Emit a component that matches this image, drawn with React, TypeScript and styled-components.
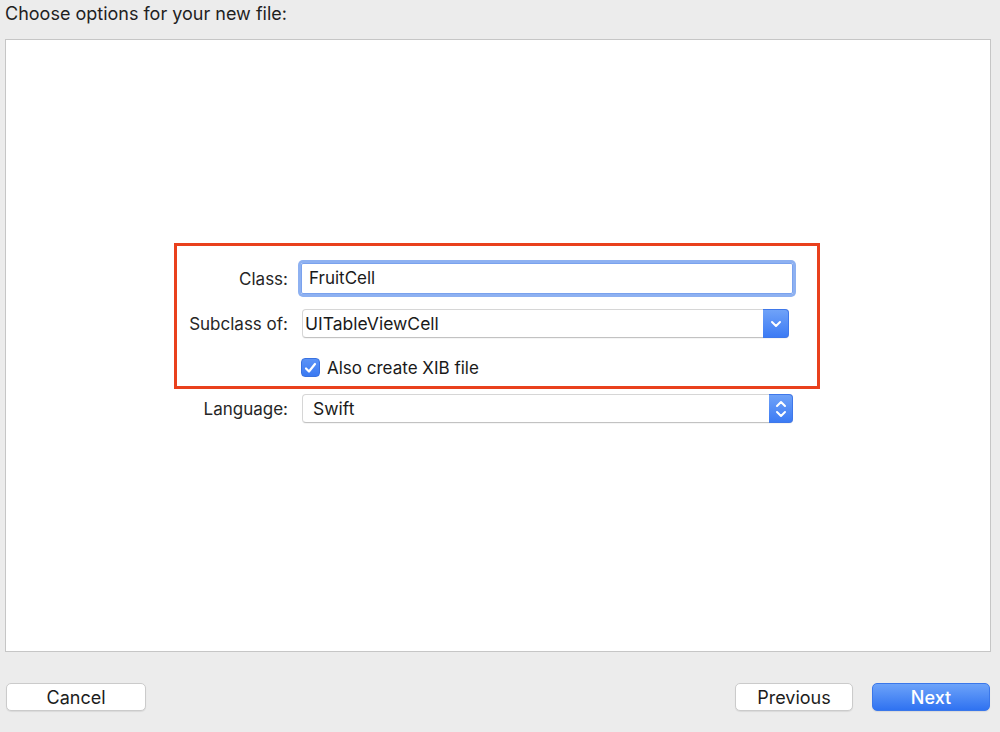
import styled, { createGlobalStyle } from "styled-components";

const GlobalStyle = createGlobalStyle`
    html, body {
        margin: 0;
        padding: 0;
        background: #ececec;
    }
    body {
        font-family: "Inter", "Liberation Sans", sans-serif;
        color: #1d1d1d;
        -webkit-font-smoothing: antialiased;
    }
`;

const ChevronDown = () => (
    <svg width="12" height="8" viewBox="0 0 12 8">
        <path d="M2 2 L6 6 L10 2" fill="none" stroke="#fff" strokeWidth="2" strokeLinecap="round" strokeLinejoin="round" />
    </svg>
);

const UpDown = () => (
    <svg width="12" height="20" viewBox="0 0 12 20">
        <path d="M2 7 L6 3 L10 7" fill="none" stroke="#fff" strokeWidth="2" strokeLinecap="round" strokeLinejoin="round" />
        <path d="M2 13 L6 17 L10 13" fill="none" stroke="#fff" strokeWidth="2" strokeLinecap="round" strokeLinejoin="round" />
    </svg>
);

const Check = () => (
    <svg width="13" height="12" viewBox="0 0 13 12">
        <path d="M2 6.5 L5 9.5 L11 2" fill="none" stroke="#fff" strokeWidth="2.2" strokeLinecap="round" strokeLinejoin="round" />
    </svg>
);

const App: React.FC = () => {
    return (
        <>
            <GlobalStyle />
            <Window>
                <Title>Choose options for your new file:</Title>
                <Panel>
                    <Form>
                        <Highlight>
                            <Row>
                                <Label>Class:</Label>
                                <TextField>FruitCell</TextField>
                            </Row>
                            <Row>
                                <Label>Subclass of:</Label>
                                <Popup $width={487}>
                                    <PopupValue $inset={2}>UITableViewCell</PopupValue>
                                    <PopupArrow $width={25}>
                                        <ChevronDown />
                                    </PopupArrow>
                                </Popup>
                            </Row>
                            <Row>
                                <span />
                                <CheckRow>
                                    <CheckBox>
                                        <Check />
                                    </CheckBox>
                                    <CheckLabel>Also create XIB file</CheckLabel>
                                </CheckRow>
                            </Row>
                        </Highlight>
                        <PlainRow>
                            <Label>Language:</Label>
                            <Popup $width={491}>
                                <PopupValue $inset={10}>Swift</PopupValue>
                                <PopupArrow $width={23}>
                                    <UpDown />
                                </PopupArrow>
                            </Popup>
                        </PlainRow>
                    </Form>
                </Panel>
                <Footer>
                    <Button $width={140}>Cancel</Button>
                    <Spacer />
                    <Button $width={118}>Previous</Button>
                    <Button $width={118} $primary>
                        Next
                    </Button>
                </Footer>
            </Window>
        </>
    );
};

export default App;

const Window = styled.div`
    width: 1000px;
    height: 732px;
    display: flex;
    flex-direction: column;
    overflow: hidden;
`;

const Title = styled.div`
    height: 39px;
    padding-left: 5px;
    font-size: 18px;
    line-height: 28px;
    color: #1f1f1f;
`;

const Panel = styled.div`
    margin-left: 5px;
    width: 984px;
    height: 611px;
    background: #fff;
    border: 1px solid #c6c6c6;
`;

const Form = styled.div`
    margin-top: 203px;
    margin-left: 168px;
    display: flex;
    flex-direction: column;
    gap: 5px;
`;

const Highlight = styled.div`
    width: 640px;
    border: 3px solid #e9401d;
    padding: 17px 0 4px;
    display: flex;
    flex-direction: column;
    gap: 15px;
`;

const Row = styled.div`
    display: grid;
    grid-template-columns: 111px auto;
    column-gap: 13px;
    align-items: center;
`;

const PlainRow = styled(Row)`
    margin-left: 3px;
`;

const Label = styled.div`
    text-align: right;
    font-size: 17px;
    color: #262626;
`;

const TextField = styled.div`
    width: 492px;
    height: 31px;
    box-sizing: border-box;
    border: 1px solid #7aa2ee;
    border-radius: 2px;
    box-shadow: 0 0 0 3px #8eb1f1;
    padding-left: 7px;
    font-size: 17px;
    line-height: 29px;
    color: #1a1a1a;
`;

const Popup = styled.div<{ $width: number }>`
    width: ${({ $width }) => $width}px;
    height: 29px;
    box-sizing: border-box;
    margin-left: 1px;
    display: flex;
    border: 1px solid #d6d6d6;
    border-bottom-color: #c2c2c2;
    border-radius: 4px;
    background: #fff;
    box-shadow: 0 1px 0 rgba(0, 0, 0, 0.04);
`;

const PopupValue = styled.div<{ $inset: number }>`
    flex: 1;
    padding-left: ${({ $inset }) => $inset}px;
    font-size: 17.5px;
    line-height: 27px;
    color: #1a1a1a;
`;

const PopupArrow = styled.div<{ $width: number }>`
    width: ${({ $width }) => $width}px;
    margin: -1px -1px -1px 0;
    display: flex;
    align-items: center;
    justify-content: center;
    border-radius: 0 4px 4px 0;
    background: linear-gradient(#6fa2f8, #3c7bf4);
    border: 1px solid #3f78ea;
    border-left: none;
`;

const CheckRow = styled.div`
    height: 29px;
    display: flex;
    align-items: center;
    gap: 7px;
`;

const CheckBox = styled.div`
    width: 19px;
    height: 19px;
    box-sizing: border-box;
    border-radius: 4px;
    background: linear-gradient(#5b93f7, #3a79f2);
    border: 1px solid #3a72e0;
    display: flex;
    align-items: center;
    justify-content: center;
`;

const CheckLabel = styled.span`
    font-size: 17px;
    color: #1a1a1a;
`;

const Footer = styled.div`
    display: flex;
    align-items: center;
    gap: 19px;
    padding: 31px 10px 0 6px;
`;

const Spacer = styled.div`
    flex: 1;
`;

const Button = styled.div<{ $width: number; $primary?: boolean }>`
    width: ${({ $width }) => $width}px;
    height: 28px;
    box-sizing: border-box;
    border-radius: 5px;
    display: flex;
    align-items: center;
    justify-content: center;
    font-size: 18px;
    font-weight: ${({ $primary }) => ($primary ? 500 : 400)};
    color: ${({ $primary }) => ($primary ? "#fff" : "#1c1c1c")};
    background: ${({ $primary }) => ($primary ? "linear-gradient(#6da3f9, #2f72f1)" : "#fff")};
    border: 1px solid ${({ $primary }) => ($primary ? "#3a77ea" : "#cbcbcb")};
    box-shadow: 0 1px 1px rgba(0, 0, 0, 0.08);
`;
